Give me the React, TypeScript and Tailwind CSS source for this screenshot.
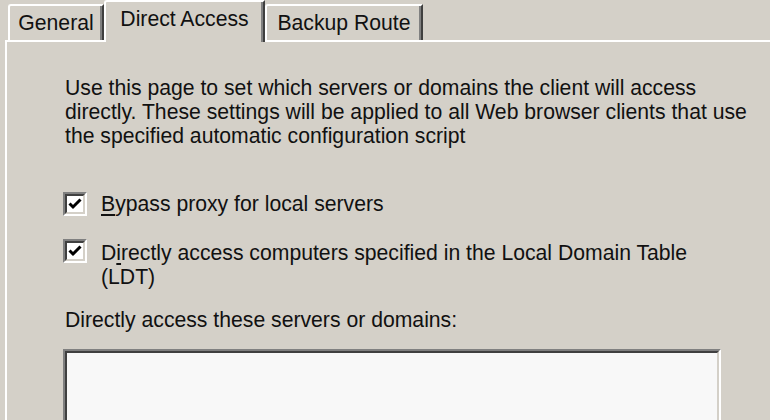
import React from "react"

const font = { fontFamily: '"Liberation Sans", Arial, sans-serif' }

function Check() {
  return (
    <span className="flex h-[24px] w-[24px] shrink-0 border-2 border-t-[#808080] border-l-[#808080] border-r-white border-b-white">
      <span className="flex flex-1 items-center justify-center border-2 border-t-[#404040] border-l-[#404040] border-r-[#d4d0c8] border-b-[#d4d0c8] bg-white">
        <svg width="14" height="14" viewBox="0 0 14 14">
          <path d="M1.5 6.5 L5 10 L12.5 2.5" fill="none" stroke="#000" strokeWidth="3" />
        </svg>
      </span>
    </span>
  )
}

export default function App() {
  return (
    <div className="flex h-[420px] w-[770px] flex-col overflow-hidden bg-[#d4d0c8] text-[21.2px] leading-[24px] text-[#111]" style={font}>
      {/* tab strip */}
      <div className="flex h-[41px] items-end pl-[8px]">
        <div className="flex h-[36px] w-[96px] justify-center rounded-tl-[3px] border-t-2 border-l-2 border-r-2 border-white border-r-[#404040] pt-[5px] shadow-[inset_-2px_0_0_#808080]">
          General
        </div>
        <div className="relative z-10 -mb-[2px] flex h-[42px] w-[161px] justify-center rounded-tl-[3px] border-t-2 border-l-2 border-r-2 border-white border-r-[#404040] bg-[#d4d0c8] pt-[5px] shadow-[inset_-2px_0_0_#808080]">
          Direct Access
        </div>
        <div className="flex h-[36px] w-[158px] justify-center rounded-tl-[3px] border-t-2 border-l-2 border-r-2 border-white border-r-[#404040] pt-[5px] shadow-[inset_-2px_0_0_#808080]">
          Backup Route
        </div>
      </div>

      {/* page */}
      <div className="ml-[5px] flex flex-1 flex-col border-t-2 border-l-2 border-white pl-[56px] pt-[34px]">
        <p className="ml-[2px] whitespace-nowrap">
          Use this page to set which servers or domains the client will access
          <br />
          directly. These settings will be applied to all Web browser clients that use
          <br />
          the specified automatic configuration script
        </p>

        <label className="mt-[44px] flex items-start gap-[14px]">
          <Check />
          <span>
            <span className="underline underline-offset-[3px]">B</span>ypass proxy for local servers
          </span>
        </label>

        <label className="mt-[25px] flex items-start gap-[14px]">
          <span className="-mt-[2px]">
            <Check />
          </span>
          <span>
            D<span className="underline underline-offset-[3px]">i</span>rectly access computers specified in the Local Domain Table
            <br />
            (LDT)
          </span>
        </label>

        <div className="ml-[2px] mt-[19px]">Directly access these servers or domains:</div>

        <div className="mt-[17px] h-[100px] w-[658px] border-2 border-t-[#808080] border-l-[#808080] border-r-white border-b-white">
          <div className="h-full border-2 border-t-[#404040] border-l-[#404040] border-r-[#d4d0c8] border-b-[#d4d0c8] bg-[#f8f8f8]" />
        </div>
      </div>
    </div>
  )
}
